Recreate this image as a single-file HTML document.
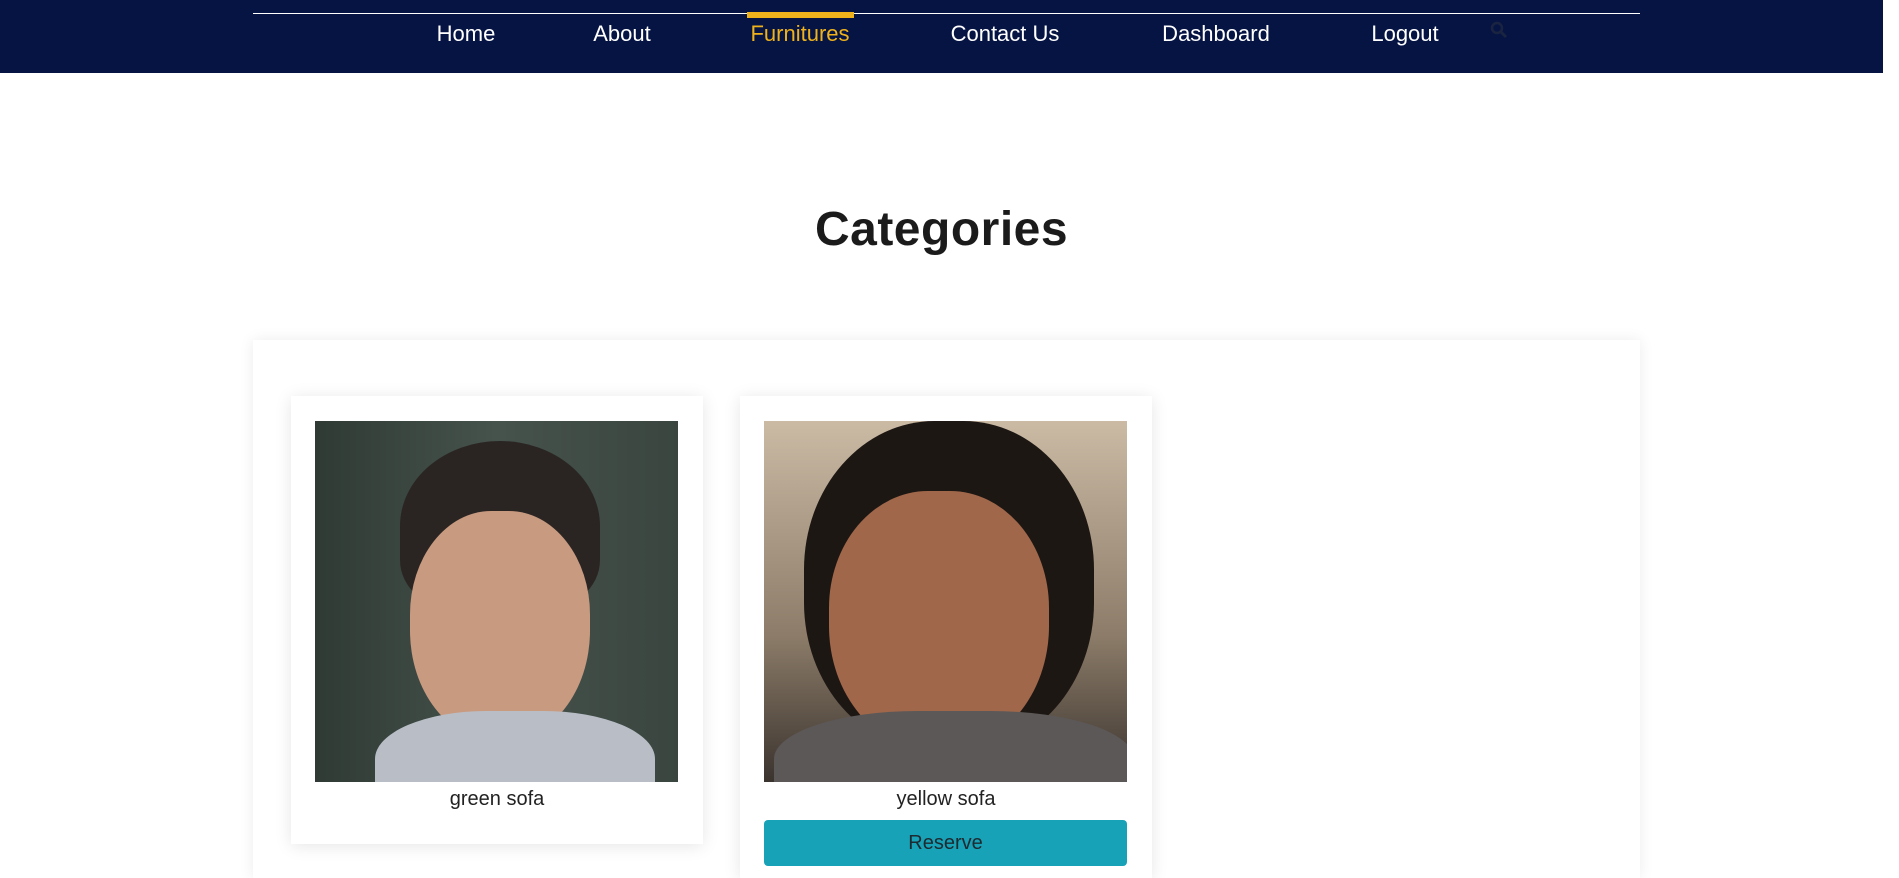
<!DOCTYPE html>
<html style="width:1899px;height:878px;overflow:hidden"><head><meta charset="utf-8"><style>
*{margin:0;padding:0;box-sizing:border-box}
body{width:1899px;height:878px;overflow:hidden;background:#fff;font-family:"Liberation Sans",sans-serif;position:relative}
.nav{position:absolute;left:0;top:0;width:1883px;height:73px;background:#061444}
.line{position:absolute;left:253px;top:13px;width:1387px;height:1px;background:#fff}
.bar{position:absolute;left:747px;top:12px;width:107px;height:6px;background:#efb21a}
.ni{position:absolute;top:21px;font-size:22px;color:#fff;transform:translateX(-50%);white-space:nowrap}
h1{position:absolute;left:0;width:1883px;text-align:center;top:202px;font-size:48px;font-weight:bold;color:#1b1b1b;letter-spacing:0.5px}
.cont{position:absolute;left:253px;top:340px;width:1387px;height:538px;background:#fff;box-shadow:0 0 14px rgba(0,0,0,.08)}
.card{position:absolute;top:396px;width:412px;background:#fff;box-shadow:0 2px 16px rgba(0,0,0,.10)}
.img{position:absolute;left:24px;top:25px;width:363px;height:361px;overflow:hidden}
.cap{position:absolute;left:0;width:100%;text-align:center;top:392px;font-size:20px;color:#222}
.btn{position:absolute;left:24px;top:424px;width:363px;height:46px;background:#17a2b8;border-radius:4px;text-align:center;line-height:46px;font-size:20px;color:#1d2a30}
</style></head><body>
<div class="nav">
<div class="line"></div><div class="bar"></div>
<div class="ni" style="left:466px">Home</div>
<div class="ni" style="left:622px">About</div>
<div class="ni" style="left:800px;color:#efb21a">Furnitures</div>
<div class="ni" style="left:1005px">Contact Us</div>
<div class="ni" style="left:1216px">Dashboard</div>
<div class="ni" style="left:1405px">Logout</div>
<svg style="position:absolute;left:1490px;top:21px" width="18" height="18" viewBox="0 0 18 18"><circle cx="7" cy="7" r="5" fill="none" stroke="#1a2440" stroke-width="2.5"/><path d="M11 11l5 5" stroke="#1a2440" stroke-width="3"/></svg>
</div>
<h1>Categories</h1>
<div class="cont"></div>
<div class="card" style="left:291px;height:448px">
<div class="img" style="background:linear-gradient(90deg,#2f3a35,#46524c 50%,#3a4540)">
<div style="position:absolute;left:85px;top:20px;width:200px;height:170px;border-radius:50% 50% 30% 30%;background:#2a2523"></div>
<div style="position:absolute;left:95px;top:90px;width:180px;height:230px;border-radius:45% 45% 48% 48%;background:#c89a80"></div>
<div style="position:absolute;left:60px;top:290px;width:280px;height:120px;border-radius:40% 40% 0 0;background:#b9bec6"></div>
</div>
<div class="cap">green sofa</div>
</div>
<div class="card" style="left:740px;height:482px">
<div class="img" style="background:linear-gradient(180deg,#cbbba5,#8b7b68 60%,#3a332e)">
<div style="position:absolute;left:40px;top:0;width:290px;height:330px;border-radius:45%;background:#1d1714"></div>
<div style="position:absolute;left:65px;top:70px;width:220px;height:260px;border-radius:45% 45% 48% 48%;background:#a0674a"></div>
<div style="position:absolute;left:10px;top:290px;width:360px;height:120px;border-radius:40% 40% 0 0;background:#5c5858"></div>
</div>
<div class="cap">yellow sofa</div>
<div class="btn">Reserve</div>
</div>
</body></html>
